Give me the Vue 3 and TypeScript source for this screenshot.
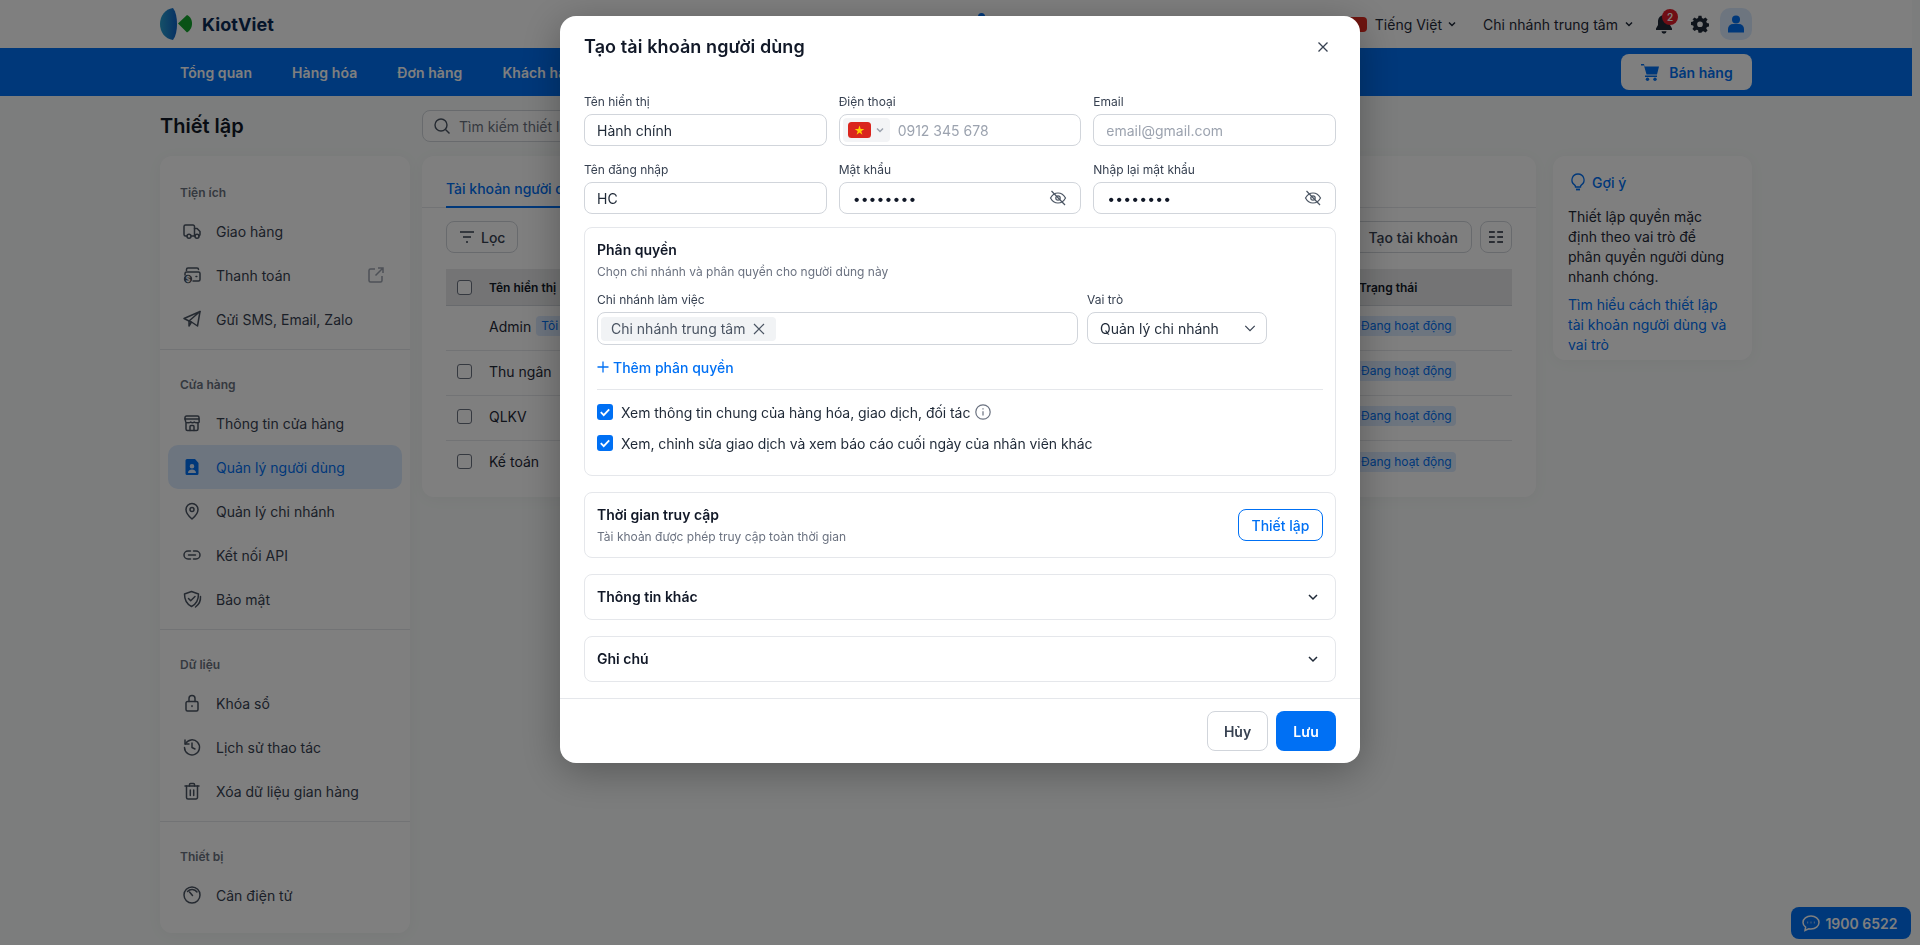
<script setup lang="ts">
type Item = { label: string; icon: string; active?: boolean; ext?: boolean }
type Section = { title: string; items: Item[] }

const icons: Record<string, string[]> = {
  truck: ['M5 15H3.500A1.500 1.500 0 0 1 2 13.500v-8A1.500 1.500 0 0 1 3.500 4H11a1.500 1.500 0 0 1 1.500 1.500V15H9', 'M12.500 7.500h2.600L18 10.600v3A1.400 1.400 0 0 1 16.600 15M12.500 15H13', 'M9 15.200a2 2 0 1 1-4 0a2 2 0 1 1 4 0', 'M17 15.200a2 2 0 1 1-4 0a2 2 0 1 1 4 0'],
  wallet: ['M4.500 5.500V4.500A1.500 1.500 0 0 1 6 3h9a1.500 1.500 0 0 1 1.500 1.500', 'M3 10V8.500A1.500 1.500 0 0 1 4.500 7h12A1.500 1.500 0 0 1 18 8.500v6a1.500 1.500 0 0 1-1.500 1.500H11', 'M14 11.500h.800'],
  send: ['M18 2.500 2 9.500l5 2.500 11-9.500Z', 'M18 2.500 15.500 17 9.500 13l-2.500-1v5l2.500-4'],
  store: ['M4.500 3h11A1.500 1.500 0 0 1 17 4.500V6H3V4.500A1.500 1.500 0 0 1 4.500 3Z', 'M3 6l.800 3c.300 1 4 1 5 0 1 1 2.400 1 3.400 0 1 1 4.700 1 5 0L17 6', 'M4 10v6a1.500 1.500 0 0 0 1.500 1.500h9A1.500 1.500 0 0 0 16 16v-6', 'M8 17.500v-4a1 1 0 0 1 1-1h2a1 1 0 0 1 1 1v4'],
  pin: ['M10 18s6-5 6-9.500a6 6 0 1 0-12 0C4 13 10 18 10 18Z', 'M12 8.500a2 2 0 1 1-4 0a2 2 0 1 1 4 0'],
  link: ['M8.500 6H6a4 4 0 0 0 0 8h2.500', 'M11.500 6H14a4 4 0 0 1 0 8h-2.500', 'M6.500 10h7'],
  shield: ['M9.500 2.500 2.500 5c0 5.500 1.800 10 7 12.500 5.200-2.500 7-7 7-12.500L9.500 2.500Z', 'M6.500 9.500l2.200 2.200L13 7.500', 'M18.500 7.500c.300 4.500-1.500 8-5 10.500'],
  lock: ['M5.500 8.500h9A1.500 1.500 0 0 1 16 10v6.500a1.500 1.500 0 0 1-1.500 1.500h-9A1.500 1.500 0 0 1 4 16.500V10a1.500 1.500 0 0 1 1.500-1.500Z', 'M7 8.500V5.500a3 3 0 0 1 6 0v3', 'M10 12.800v.800'],
  history: ['M3 3v4h4', 'M3.300 7A7.500 7.500 0 1 1 2.500 10.500', 'M10 6v4.500l3 1.500'],
  trash: ['M3 5h14', 'M7.500 5V3.500A1 1 0 0 1 8.500 2.500h3a1 1 0 0 1 1 1V5', 'M4.500 5v11.500A1.500 1.500 0 0 0 6 18h8a1.500 1.500 0 0 0 1.500-1.500V5', 'M8.300 9v5.500M11.700 9v5.500'],
  gauge: ['M18 10a8 8 0 1 1-16 0a8 8 0 1 1 16 0', 'M5.500 6.500A6 6 0 0 1 15 7', 'M7.500 7l3 3.500']
}

const sections: Section[] = [
  { title: 'Tiện ích', items: [
    { label: 'Giao hàng', icon: 'truck' },
    { label: 'Thanh toán', icon: 'wallet', ext: true },
    { label: 'Gửi SMS, Email, Zalo', icon: 'send' }
  ] },
  { title: 'Cửa hàng', items: [
    { label: 'Thông tin cửa hàng', icon: 'store' },
    { label: 'Quản lý người dùng', icon: 'user', active: true },
    { label: 'Quản lý chi nhánh', icon: 'pin' },
    { label: 'Kết nối API', icon: 'link' },
    { label: 'Bảo mật', icon: 'shield' }
  ] },
  { title: 'Dữ liệu', items: [
    { label: 'Khóa sổ', icon: 'lock' },
    { label: 'Lịch sử thao tác', icon: 'history' },
    { label: 'Xóa dữ liệu gian hàng', icon: 'trash' }
  ] },
  { title: 'Thiết bị', items: [{ label: 'Cân điện tử', icon: 'gauge' }] }
]

const navItems = ['Tổng quan', 'Hàng hóa', 'Đơn hàng', 'Khách hàng']
const rows = [
  { name: 'Admin', me: true },
  { name: 'Thu ngân', me: false },
  { name: 'QLKV', me: false },
  { name: 'Kế toán', me: false }
]
</script>

<template>
  <div class="page">
    <header class="topbar">
      <div class="wrap topbar-in">
        <div class="logo">
          <svg width="32" height="32" viewBox="0 0 32 32">
            <defs>
              <linearGradient id="lens" x1="0" y1="0" x2="1" y2="0">
                <stop offset="0" stop-color="#2aa0cf" />
                <stop offset="1" stop-color="#0f63c8" />
              </linearGradient>
            </defs>
            <path d="M13 0C5 1 0 8 0 16c0 8 5 15 13 16 3-4 4-10 4-16S16 4 13 0Z" fill="url(#lens)" />
            <path d="M18 15.500 27 7c4 2 5 5.500 5 8.500s-1 6.500-5 9Z" fill="#12a52c" />
          </svg>
          <span class="logo-text">KiotViet</span>
        </div>
        <span class="top-dot"></span>
        <div class="top-right">
          <span class="flag-sm"></span>
          <span class="top-link lang">Tiếng Việt
            <svg class="mini" viewBox="0 0 10 10"><path d="M2 3.500 5 6.500 8 3.500" /></svg>
          </span>
          <span class="top-link branch">Chi nhánh trung tâm
            <svg class="mini" viewBox="0 0 10 10"><path d="M2 3.500 5 6.500 8 3.500" /></svg>
          </span>
          <span class="bell">
            <svg width="18" height="20" viewBox="0 0 18 20" fill="#1f2937"><path d="M9 1a6 6 0 0 0-6 6v4L1 14.500V16h16v-1.500L15 11V7a6 6 0 0 0-6-6Z" /><path d="M6.500 17.200a2.500 2.500 0 0 0 5 0Z" /></svg>
            <b class="bell-badge">2</b>
          </span>
          <svg class="gear" width="18" height="18" viewBox="0 0 24 24" fill="#1f2937"><path fill-rule="evenodd" d="M10 1h4l.600 3.100 2 .900L19.300 3.200l2.800 2.800-1.800 2.700.900 2 3 .600v4l-3 .600-.900 2 1.800 2.600-2.800 2.800-2.700-1.700-2 .800L14 23.500h-4l-.600-3.100-2-.800-2.700 1.700-2.800-2.800 1.800-2.600-.900-2-3-.600v-4l3-.600.900-2L1.900 6l2.800-2.800L7.400 5l2-.900L10 1Zm2 7.500a3.800 3.800 0 1 0 0 7.600 3.800 3.800 0 0 0 0-7.600Z" /></svg>
          <span class="avatar">
            <svg width="16" height="18" viewBox="0 0 16 18" fill="#0070f4"><circle cx="8" cy="4.500" r="4" /><path d="M0 17.500v-3.500a5 5 0 0 1 5-5h6a5 5 0 0 1 5 5v3.500Z" /></svg>
          </span>
        </div>
      </div>
    </header>

    <nav class="navbar">
      <div class="wrap nav-in">
        <div class="nav-list">
          <a v-for="n in navItems" :key="n" class="nav-item">{{ n }}</a>
        </div>
        <button class="sell">
          <svg width="20" height="20" viewBox="0 0 20 20" fill="#0070f4"><path d="M1 2h3l.600 2.500H19l-2 8H6.500L4 3.500H1Z" /><rect x="5" y="13.500" width="12" height="1.500" /><circle cx="7.500" cy="17.300" r="1.700" /><circle cx="15" cy="17.300" r="1.700" /></svg>
          Bán hàng
        </button>
      </div>
    </nav>

    <main class="wrap content">
      <div class="title-row">
        <h1 class="page-title">Thiết lập</h1>
        <div class="search">
          <svg width="18" height="18" viewBox="0 0 18 18" fill="none" stroke="#4b5563" stroke-width="1.400"><circle cx="8" cy="8" r="6" /><path d="m12.500 12.500 4 4" /></svg>
          <span>Tìm kiếm thiết lập</span>
        </div>
      </div>
      <div class="columns">
        <aside class="sidebar">
          <section v-for="s in sections" :key="s.title" class="side-sec">
            <h3 class="side-title">{{ s.title }}</h3>
            <a v-for="it in s.items" :key="it.label" class="side-item" :class="{ active: it.active }">
              <svg v-if="it.icon === 'user'" class="side-ico" viewBox="0 0 20 20">
                <path class="solid" fill-rule="evenodd" d="M5 2h8l3.500 4v10.500A1.500 1.500 0 0 1 15 18H5a1.500 1.500 0 0 1-1.500-1.500v-13A1.500 1.500 0 0 1 5 2Zm5 5a2.300 2.300 0 1 0 0 4.600A2.300 2.300 0 0 0 10 7Zm-4 9h8c0-2-1.500-3.400-4-3.400S6 14 6 16Z" />
              </svg>
              <svg v-else class="side-ico" viewBox="0 0 20 20">
                <path v-for="d in icons[it.icon]" :key="d" :d="d" />
                <template v-if="it.icon === 'wallet'">
                  <circle class="coin" cx="6" cy="14" r="4.200" />
                  <text class="coin-t" x="6" y="16.600" text-anchor="middle">$</text>
                </template>
              </svg>
              <span>{{ it.label }}</span>
              <svg v-if="it.ext" class="ext" viewBox="0 0 18 18"><path d="M15 10v4.500a1.500 1.500 0 0 1-1.500 1.500h-10A1.500 1.500 0 0 1 2 14.500v-10A1.500 1.500 0 0 1 3.500 3H8M11 2h5v5M16 2 8.500 9.500" /></svg>
            </a>
          </section>
        </aside>

        <section class="main-card">
          <div class="tabs"><span class="tab">Tài khoản người dùng</span></div>
          <div class="toolbar">
            <button class="tool-btn filter">
              <svg width="18" height="18" viewBox="0 0 18 18" fill="none" stroke="#374151" stroke-width="1.500"><path d="M2 4h14M5 9h8M8 14h2" /></svg>
              Lọc
            </button>
            <div class="tool-right">
              <button class="tool-btn create">
                <svg width="14" height="14" viewBox="0 0 14 14" fill="none" stroke="#374151" stroke-width="1.500"><path d="M7 1v12M1 7h12" /></svg>
                Tạo tài khoản
              </button>
              <button class="tool-btn icon-btn">
                <svg width="14" height="14" viewBox="0 0 14 14" fill="none" stroke="#1f2937" stroke-width="1.600"><path d="M0 2h5.800M8.200 2H14M0 7h5.800M8.200 7H14M0 12h5.800M8.200 12H14" /></svg>
              </button>
            </div>
          </div>
          <div class="table">
            <div class="thead row-grid">
              <span class="check"></span>
              <span>Tên hiển thị</span>
              <span class="status-h">Trạng thái</span>
            </div>
            <div v-for="r in rows" :key="r.name" class="tr row-grid">
              <span :class="r.me ? 'no-check' : 'check'"></span>
              <span class="name">{{ r.name }}<em v-if="r.me" class="me">Tôi</em></span>
              <span class="badge">Đang hoạt động</span>
            </div>
          </div>
        </section>

        <aside class="hint">
          <div class="hint-head">
            <svg width="16" height="18" viewBox="0 0 16 18" fill="none" stroke="#0070f4" stroke-width="1.300"><path d="M8 1a6 6 0 0 0-3.500 10.900c.700.500 1 1.300 1 2.100h5c0-.800.300-1.600 1-2.100A6 6 0 0 0 8 1Z" /><path d="M6 16.500h4" stroke-width="1.800" /></svg>
            <span>Gợi ý</span>
          </div>
          <p class="hint-p">Thiết lập quyền mặc định theo vai trò để phân quyền người dùng nhanh chóng.</p>
          <a class="hint-a">Tìm hiểu cách thiết lập tài khoản người dùng và vai trò</a>
        </aside>
      </div>
    </main>

    <button class="chat">
      <svg width="18" height="18" viewBox="0 0 18 18" fill="none" stroke="currentColor" stroke-width="1.500"><path d="M9 2c4.400 0 8 2.800 8 6.500S13.400 15 9 15c-.800 0-1.500-.100-2.200-.300L3 16.500l.600-3.300C2 12 1 10.400 1 8.500 1 4.800 4.600 2 9 2Z" /><path d="M5.500 8.500h.600M8.700 8.500h.600M11.900 8.500h.600" stroke-width="1.800" /></svg>
      1900 6522
    </button>

    <div class="overlay">
      <div class="modal">
        <div class="m-head">
          <h2 class="m-title">Tạo tài khoản người dùng</h2>
          <svg class="m-close" viewBox="0 0 12 12"><path d="M1.500 1.500l9 9M10.500 1.500l-9 9" /></svg>
        </div>
        <div class="m-body">
          <div class="form-grid">
            <label class="field"><span class="lbl">Tên hiển thị</span><div class="inp">Hành chính</div></label>
            <label class="field"><span class="lbl">Điện thoại</span>
              <div class="inp phone">
                <span class="flag-pick">
                  <svg class="flag" viewBox="0 0 23 16"><rect width="23" height="16" rx="3.500" fill="#da251d" /><path d="m11.500 3.500 1.200 3.500h3.600l-3 2.200 1.100 3.500-2.900-2.200-2.900 2.200 1.100-3.500-3-2.200h3.600Z" fill="#ffcd00" /></svg>
                  <svg class="mini gray" viewBox="0 0 10 10"><path d="M2 3.500 5 6.500 8 3.500" /></svg>
                </span>
                <span class="ph">0912 345 678</span>
              </div>
            </label>
            <label class="field"><span class="lbl">Email</span><div class="inp ph">email@gmail.com</div></label>
            <label class="field"><span class="lbl">Tên đăng nhập</span><div class="inp">HC</div></label>
            <label v-for="l in ['Mật khẩu', 'Nhập lại mật khẩu']" :key="l" class="field"><span class="lbl">{{ l }}</span>
              <div class="inp pw">
                <span class="dots">••••••••</span>
                <svg class="eye" viewBox="0 0 18 18"><path d="M1.500 9S4.200 4 9 4s7.500 5 7.500 5-2.700 5-7.500 5-7.500-5-7.500-5Z" /><path d="M11.200 9a2.200 2.200 0 1 1-4.400 0 2.200 2.200 0 0 1 4.400 0Z" /><path d="M2.500 2 16 16" /></svg>
              </div>
            </label>
          </div>

          <section class="box perm">
            <h4 class="box-title">Phân quyền</h4>
            <p class="box-sub">Chọn chi nhánh và phân quyền cho người dùng này</p>
            <div class="perm-grid">
              <div class="field"><span class="lbl">Chi nhánh làm việc</span>
                <div class="inp multi"><span class="chip">Chi nhánh trung tâm
                  <svg viewBox="0 0 12 12"><path d="M1 1l10 10M11 1 1 11" /></svg>
                </span></div>
              </div>
              <div class="field"><span class="lbl">Vai trò</span>
                <div class="inp role">Quản lý chi nhánh
                  <svg viewBox="0 0 14 14"><path d="M1.500 4.500 7 10l5.500-5.500" /></svg>
                </div>
              </div>
            </div>
            <a class="add"><svg viewBox="0 0 12 12"><path d="M6 .500v11M.500 6h11" /></svg>Thêm phân quyền</a>
            <hr class="sep" />
            <div class="cb-row first"><span class="cb"><svg viewBox="0 0 16 16"><path d="m3.800 8.200 2.900 2.900 5.500-5.800" /></svg></span>Xem thông tin chung của hàng hóa, giao dịch, đối tác
              <svg class="info" viewBox="0 0 16 16"><circle cx="8" cy="8" r="7.200" /><path d="M8 7.200v4.300M8 4.300v1.300" /></svg>
            </div>
            <div class="cb-row"><span class="cb"><svg viewBox="0 0 16 16"><path d="m3.800 8.200 2.900 2.900 5.500-5.800" /></svg></span>Xem, chỉnh sửa giao dịch và xem báo cáo cuối ngày của nhân viên khác</div>
          </section>

          <section class="box access">
            <div>
              <h4 class="box-title">Thời gian truy cập</h4>
              <p class="box-sub">Tài khoản được phép truy cập toàn thời gian</p>
            </div>
            <button class="outline">Thiết lập</button>
          </section>
          <section v-for="t in ['Thông tin khác', 'Ghi chú']" :key="t" class="box fold">
            <h4 class="box-title">{{ t }}</h4>
            <svg viewBox="0 0 12 12"><path d="M2 4 6 8l4-4" /></svg>
          </section>
        </div>
        <div class="m-foot">
          <button class="btn ghost">Hủy</button>
          <button class="btn primary">Lưu</button>
        </div>
      </div>
    </div>
  </div>
</template>

<style>
html, body { margin: 0; background: #f8fbfa; overflow: hidden; }
</style>

<style scoped>
* { box-sizing: border-box; }
.page { position: relative; width: 1912px; height: 945px; overflow: visible; font-family: Inter, "Noto Sans", sans-serif; font-size: 14px; color: #1f2937; background: #f8fbfa; }
.wrap { width: 1592px; margin: 0 auto; }
.topbar { position: relative; height: 48px; background: #fff; }
.topbar-in { height: 48px; display: flex; align-items: center; justify-content: space-between; }
.logo { display: flex; align-items: center; gap: 10px; }
.logo-text { font-size: 18px; font-weight: 700; color: #0b2a55; letter-spacing: .1px; }
.top-dot { position: absolute; left: 978px; top: 13px; width: 7px; height: 7px; border-radius: 50%; background: #0070f4; }
.top-right { display: flex; align-items: center; height: 48px; }
.flag-sm { width: 27px; height: 15px; background: #e02b20; border-radius: 4px; margin-right: 8px; }
.top-link { display: flex; align-items: center; gap: 6px; color: #1f2937; white-space: nowrap; }
.lang { margin-right: 26px; gap: 5px; }
.branch { margin-right: 21px; letter-spacing: .03px; }
.mini { width: 10px; height: 10px; fill: none; stroke: #1f2937; stroke-width: 1.500; }
.mini.gray { stroke: #9ca3af; }
.bell { position: relative; display: flex; margin-right: 18px; }
.bell-badge { position: absolute; left: 7px; top: -5px; width: 16px; height: 16px; border-radius: 50%; background: #e11d2a; color: #fff; font-size: 10px; font-weight: 600; line-height: 16px; text-align: center; }
.gear { margin-right: 11px; }
.avatar { width: 32px; height: 32px; border-radius: 10px; background: #dbeafe; display: flex; align-items: center; justify-content: center; }

.navbar { height: 48px; background: #0070f4; }
.nav-in { height: 48px; display: flex; align-items: center; justify-content: space-between; }
.nav-list { display: flex; }
.nav-item { padding: 0 20px; color: #fff; font-weight: 600; letter-spacing: .07px; white-space: nowrap; }
.sell { width: 131px; height: 36px; border: 0; border-radius: 8px; background: #fff; color: #0070f4; font: 600 14px Inter, sans-serif; display: flex; align-items: center; justify-content: center; gap: 9px; }

.title-row { display: flex; align-items: center; height: 32px; margin-top: 14px; gap: 0; }
.page-title { width: 262px; margin: 0; font-size: 20px; font-weight: 600; color: #111827; }
.search { width: 400px; height: 32px; border: 1px solid #d1d5db; border-radius: 8px; background: #fff; display: flex; align-items: center; gap: 8px; padding: 0 10px; color: #6b7280; }
.columns { display: flex; align-items: flex-start; gap: 12px; margin-top: 14px; }
.sidebar { width: 250px; height: 777px; background: #fff; border-radius: 12px; box-shadow: 0 2px 16px rgba(0,0,0,.04); }
.side-sec { padding: 27px 8px 8px; border-bottom: 1px solid #e5e7eb; }
.side-sec:first-child { padding-top: 29px; }
.side-sec:last-child { border-bottom: 0; }
.side-title { margin: 0 0 8px 12px; height: 16px; font-size: 12px; line-height: 16px; font-weight: 600; color: #6b7280; }
.side-item { height: 44px; padding: 0 12px 0 14px; display: flex; align-items: center; gap: 14px; border-radius: 10px; color: #374151; white-space: nowrap; }
.side-item.active { background: #dbeafe; color: #0070f4; }
.side-ico { width: 20px; height: 20px; flex: none; fill: none; stroke: #4b5563; stroke-width: 1.500; stroke-linecap: round; stroke-linejoin: round; }
.solid { fill: #0070f4; stroke: none; }
.coin { fill: #4b5563; stroke: none; }
.coin-t { fill: #fff; stroke: none; font-size: 7px; font-weight: 700; font-family: Inter, sans-serif; }
.ext { width: 18px; height: 18px; margin-left: auto; margin-right: 5px; fill: none; stroke: #9ca3af; stroke-width: 1.500; }

.main-card { width: 1114px; height: 341px; padding: 0 24px; background: #fff; border-radius: 12px; box-shadow: 0 2px 16px rgba(0,0,0,.04); }
.tabs { height: 52px; margin: 0 -24px; padding-left: 24px; border-bottom: 1px solid #e5e7eb; display: flex; }
.tab { height: 52px; padding: 23px 0 0; line-height: 20px; color: #0070f4; font-weight: 500; border-bottom: 2px solid #0070f4; white-space: nowrap; width: 240px; }
.toolbar { display: flex; justify-content: space-between; margin-top: 13px; }
.tool-right { display: flex; gap: 8px; }
.tool-btn { height: 32px; border: 1px solid #d1d5db; border-radius: 8px; background: #fff; color: #374151; font: 500 14px Inter, sans-serif; padding: 0 11px; display: flex; align-items: center; gap: 5px; }
.filter { width: 72px; }
.create { width: 134px; justify-content: flex-end; gap: 8px; padding: 0 13px 0 0; }
.icon-btn { width: 32px; padding: 0; justify-content: center; }
.table { margin-top: 16px; }
.row-grid { display: grid; grid-template-columns: 43px 1fr 154px; align-items: center; }
.thead { height: 37px; background: #e8e9ea; border-bottom: 1px solid #d1d5db; font-size: 12px; font-weight: 600; color: #111827; }
.status-h { padding-left: 1px; }
.tr { height: 45px; padding-bottom: 4px; border-bottom: 1px solid #e5e7eb; color: #1f2937; }
.tr:last-child { border-bottom: 0; }
.check { display: block; width: 15px; height: 15px; margin-left: 11px; border: 1.500px solid #6b7280; border-radius: 3px; background: #fff; }
.no-check { display: block; }
.name { display: flex; align-items: center; }
.me { margin-left: 5px; padding: 0 5px; height: 20px; line-height: 20px; font-size: 12px; font-style: normal; border-radius: 4px; color: #0070f4; background: #dbeafe; }
.badge { justify-self: start; margin-left: -1px; padding: 0 4px; height: 20px; line-height: 20px; border-radius: 4px; font-size: 12px; color: #0070f4; background: #dbeafe; white-space: nowrap; }

.hint { width: 199px; height: 204px; margin-left: 5px; padding: 16px 15px; background: #fff; border-radius: 12px; box-shadow: 0 2px 16px rgba(0,0,0,.04); }
.hint-head { display: flex; align-items: center; gap: 6px; height: 20px; color: #0070f4; font-weight: 500; padding-left: 2px; }
.hint-p { margin: 15px 0 8px; width: 162px; line-height: 20px; color: #1f2937; }
.hint-a { display: block; width: 162px; line-height: 20px; color: #0070f4; }

.chat { position: absolute; left: 1791px; top: 907px; width: 120px; height: 32px; border: 0; border-radius: 8px; background: #0070f4; color: #fff; font: 600 14px Inter, sans-serif; display: flex; align-items: center; justify-content: center; gap: 5px; padding: 0 2px 0 0; }

.overlay { position: fixed; inset: 0; background: rgba(0,0,0,.5); display: flex; justify-content: center; align-items: flex-start; }
.modal { width: 800px; height: 747px; margin-top: 16px; background: #fff; border-radius: 16px; box-shadow: 0 8px 40px rgba(0,0,0,.3); display: flex; flex-direction: column; color: #111827; }
.m-head { height: 78px; padding: 19px 24px 0; display: flex; justify-content: space-between; align-items: flex-start; }
.m-title { margin: 0; font-size: 18px; line-height: 24px; font-weight: 600; letter-spacing: .1px; color: #111827; }
.m-close { width: 12px; height: 12px; margin: 6px 7px 0 0; fill: none; stroke: #374151; stroke-width: 1.300; }
.m-body { padding: 0 24px; flex: 1; }
.form-grid { display: grid; grid-template-columns: repeat(3, 1fr); gap: 16px 12px; }
.field { display: flex; flex-direction: column; gap: 4px; }
.lbl { font-size: 12px; line-height: 16px; color: #374151; }
.inp { height: 32px; border: 1px solid #d1d5db; border-radius: 8px; padding: 0 12px; display: flex; align-items: center; font-size: 14px; color: #1f2937; }
.ph { color: #9ca3af; }
.phone { padding: 0 0 0 3px; gap: 8px; }
.flag-pick { width: 47px; height: 24px; padding: 0 5px; border-radius: 4px; background: #f3f4f6; display: flex; align-items: center; gap: 4px; }
.flag { width: 23px; height: 16px; flex: none; }
.pw { justify-content: space-between; padding-right: 13px; }
.dots { margin-left: 1px; font-size: 14px; letter-spacing: .1px; color: #111827; }
.eye { width: 18px; height: 18px; fill: none; stroke: #4b5563; stroke-width: 1.200; }

.box { margin-top: 16px; border: 1px solid #e5e7eb; border-radius: 8px; }
.box-title { margin: 0; font-size: 14px; line-height: 20px; font-weight: 600; color: #111827; }
.box-sub { margin: 4px 0 0; font-size: 12px; line-height: 16px; color: #6b7280; }
.perm { margin-top: 13px; height: 249px; padding: 12px; }
.perm-grid { display: grid; grid-template-columns: 481px 180px; gap: 9px; margin-top: 12px; align-items: start; }
.multi { height: 33px; padding: 0 3px; }
.chip { height: 24px; padding: 0 11px 0 10px; border-radius: 4px; background: #f1f3f5; color: #4b5563; display: flex; align-items: center; gap: 8px; white-space: nowrap; }
.chip svg { width: 12px; height: 12px; fill: none; stroke: #4b5563; stroke-width: 1.200; }
.role { justify-content: space-between; padding: 0 10px 0 12px; white-space: nowrap; }
.role svg { width: 12px; height: 12px; fill: none; stroke: #374151; stroke-width: 1.400; }
.add { height: 20px; margin-top: 12px; display: flex; align-items: center; gap: 4px; color: #0070f4; font-weight: 500; }
.add svg { width: 12px; height: 12px; fill: none; stroke: #0070f4; stroke-width: 1.300; }
.sep { margin: 12px 0 0; border: 0; border-top: 1px solid #e5e7eb; }
.cb-row { height: 20px; margin-top: 11px; display: flex; align-items: center; gap: 8px; color: #1f2937; letter-spacing: -.05px; white-space: nowrap; }
.cb-row.first { margin-top: 12px; }
.cb { width: 16px; height: 16px; flex: none; border-radius: 3px; background: #0070f4; }
.cb svg { display: block; width: 16px; height: 16px; fill: none; stroke: #fff; stroke-width: 1.800; }
.info { width: 16px; height: 16px; margin-left: -3px; fill: none; stroke: #6b7280; stroke-width: 1.200; }
.access { height: 66px; padding: 12px; display: flex; align-items: center; justify-content: space-between; }
.outline { width: 85px; height: 32px; border: 1px solid #0070f4; border-radius: 8px; background: #fff; color: #0070f4; font: 500 14px Inter, sans-serif; padding: 0; }
.fold { height: 46px; padding: 0 12px; display: flex; align-items: center; justify-content: space-between; }
.fold svg { width: 12px; height: 12px; margin-right: 4px; fill: none; stroke: #1f2937; stroke-width: 1.500; }
.m-foot { height: 65px; border-top: 1px solid #e5e7eb; padding: 12px 24px; display: flex; justify-content: flex-end; gap: 8px; }
.btn { width: 60px; height: 40px; border-radius: 8px; font: 600 14px Inter, sans-serif; padding: 0; }
.ghost { width: 61px; background: #fff; border: 1px solid #d1d5db; color: #374151; }
.primary { background: #0070f4; border: 0; color: #fff; }
</style>
